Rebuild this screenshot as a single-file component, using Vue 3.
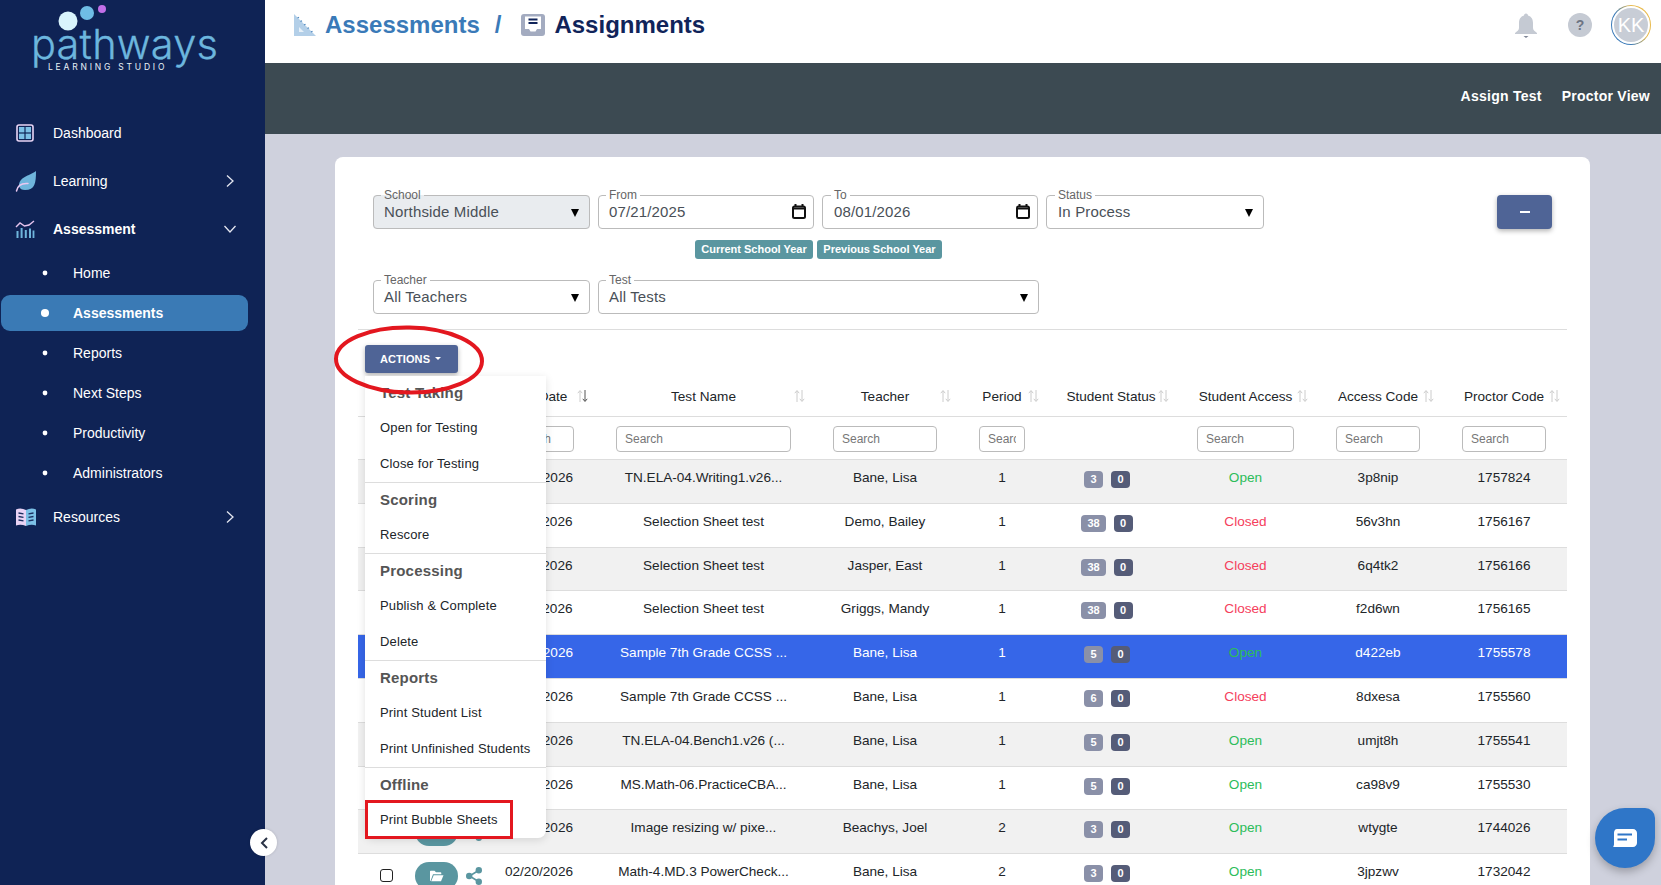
<script setup>
const subNav = ['Home', 'Assessments', 'Reports', 'Next Steps', 'Productivity', 'Administrators']
const headers = [
  { t: '', sort: false }, { t: '', sort: false },
  { t: 'Date', sort: true, active: true }, { t: 'Test Name', sort: true }, { t: 'Teacher', sort: true },
  { t: 'Period', sort: true }, { t: 'Student Status', sort: true }, { t: 'Student Access', sort: true },
  { t: 'Access Code', sort: true }, { t: 'Proctor Code', sort: true }
]
const searchCols = [false, false, true, true, true, true, false, true, true, true]
const rows = [
  ['03/12/2026', 'TN.ELA-04.Writing1.v26...', 'Bane, Lisa', 1, 3, 'Open', '3p8nip', '1757824'],
  ['03/11/2026', 'Selection Sheet test', 'Demo, Bailey', 1, 38, 'Closed', '56v3hn', '1756167'],
  ['03/11/2026', 'Selection Sheet test', 'Jasper, East', 1, 38, 'Closed', '6q4tk2', '1756166'],
  ['03/11/2026', 'Selection Sheet test', 'Griggs, Mandy', 1, 38, 'Closed', 'f2d6wn', '1756165'],
  ['03/10/2026', 'Sample 7th Grade CCSS ...', 'Bane, Lisa', 1, 5, 'Open', 'd422eb', '1755578'],
  ['03/10/2026', 'Sample 7th Grade CCSS ...', 'Bane, Lisa', 1, 6, 'Closed', '8dxesa', '1755560'],
  ['03/10/2026', 'TN.ELA-04.Bench1.v26 (...', 'Bane, Lisa', 1, 5, 'Open', 'umjt8h', '1755541'],
  ['03/10/2026', 'MS.Math-06.PracticeCBA...', 'Bane, Lisa', 1, 5, 'Open', 'ca98v9', '1755530'],
  ['02/27/2026', 'Image resizing w/ pixe...', 'Beachys, Joel', 2, 3, 'Open', 'wtygte', '1744026'],
  ['02/20/2026', 'Math-4.MD.3 PowerCheck...', 'Bane, Lisa', 2, 3, 'Open', '3jpzwv', '1732042']
]
const menu = [
  { h: 'Test Taking', items: ['Open for Testing', 'Close for Testing'] },
  { h: 'Scoring', items: ['Rescore'] },
  { h: 'Processing', items: ['Publish & Complete', 'Delete'] },
  { h: 'Reports', items: ['Print Student List', 'Print Unfinished Students'] },
  { h: 'Offline', items: ['Print Bubble Sheets'] }
]
</script>

<template>
  <div class="app">
    <aside class="side">
      <div class="logo">
        <svg class="dots" width="120" height="40" viewBox="0 0 120 40">
          <circle cx="68" cy="21" r="9.5" fill="#d9f4fc" />
          <circle cx="87" cy="13" r="7" fill="#6fbde5" />
          <circle cx="102" cy="9" r="4" fill="#c26fe8" />
        </svg>
        <div class="logo-word">pathways</div>
        <div class="logo-sub">LEARNING STUDIO</div>
      </div>
      <nav>
        <a class="nav">
          <span class="ico">
            <svg width="20" height="20" viewBox="0 0 20 20">
              <rect x="2" y="2" width="16" height="16" rx="2" fill="#0f2355" stroke="#e9d5f5" stroke-width="1.6" />
              <rect x="4" y="4" width="5.4" height="5.4" fill="#7cc0e6" /><rect x="10.6" y="4" width="5.4" height="5.4" fill="#7cc0e6" />
              <rect x="4" y="10.6" width="5.4" height="5.4" fill="#7cc0e6" /><rect x="10.6" y="10.6" width="5.4" height="5.4" fill="#7cc0e6" />
            </svg>
          </span>Dashboard
        </a>
        <a class="nav">
          <span class="ico">
            <svg width="22" height="22" viewBox="0 0 22 22">
              <path d="M21 1C21 13 20 20 10 20 7 20 5 19 4 16 4 7 14 6 21 1Z" fill="#6fb5dc" />
              <path d="M1.5 21C2.5 15.5 6.500 13 13 13.500" fill="none" stroke="#e9c8f0" stroke-width="1.5" stroke-linecap="round" />
            </svg>
          </span>Learning
          <svg class="chev" width="10" height="14" viewBox="0 0 10 14"><path d="M2 1.5 8 7 2 12.5" fill="none" stroke="#e4e6f0" stroke-width="1.3" /></svg>
        </a>
        <a class="nav strong">
          <span class="ico">
            <svg width="20" height="18" viewBox="0 0 20 18">
              <path d="M1 7 5 3 9.5 6 14 5 19 1" fill="none" stroke="#e6c4ee" stroke-width="1.4" />
              <g fill="#6fb5dc">
                <rect x="1.5" y="11" width="2" height="7" /><rect x="5.6" y="8" width="2" height="10" />
                <rect x="9.8" y="10" width="2" height="8" /><rect x="14" y="8.5" width="2" height="9.5" /><rect x="17.6" y="10.5" width="1.8" height="7.5" />
              </g>
            </svg>
          </span>Assessment
          <svg class="chev down" width="14" height="10" viewBox="0 0 14 10"><path d="M1.5 2 7 8 12.5 2" fill="none" stroke="#e4e6f0" stroke-width="1.3" /></svg>
        </a>
        <a v-for="s in subNav" :key="s" class="sub" :class="{ on: s === 'Assessments' }"><i></i>{{ s }}</a>
        <a class="nav last">
          <span class="ico">
            <svg width="22" height="20" viewBox="0 0 22 20">
              <path d="M1 2.5C4 1 7.5 1.2 11 3V19C7.5 17.4 4 17.2 1 18.5Z" fill="#e9d3f5" />
              <path d="M21 2.5C18 1 14.5 1.2 11 3V19C14.5 17.4 18 17.2 21 18.5Z" fill="#7cc0e6" />
              <g stroke="#1b2f60" stroke-width="1.3"><path d="M3.5 6 8.5 6.8M3.5 9.5 8.5 10.3M3.5 13 8.5 13.8M13.5 6.8 18.5 6M13.5 10.3 18.5 9.5M13.5 13.8 18.5 13" /></g>
            </svg>
          </span>Resources
          <svg class="chev" width="10" height="14" viewBox="0 0 10 14"><path d="M2 1.5 8 7 2 12.5" fill="none" stroke="#e4e6f0" stroke-width="1.3" /></svg>
        </a>
      </nav>
      <button class="collapse" aria-label="Collapse">
        <svg width="10" height="14" viewBox="0 0 10 14"><path d="M8 2 3 7 8 12" fill="none" stroke="#2a3346" stroke-width="2" /></svg>
      </button>
    </aside>

    <main class="main">
      <header class="top">
        <svg class="crumb-ico" width="24" height="24" viewBox="0 0 24 24">
          <path d="M1 1 23 23H1Z" fill="#b3cfe8" />
          <path d="M6 14 11 19H6Z" fill="#e6f0f8" />
          <path d="M4.500 5 6 4.200M7.500 8.500 9 7.700M11 12 12.500 11.200M14.500 15.500 16 14.700M18 19 19.500 18.200" stroke="#4f88bf" stroke-width="1.2" />
        </svg>
        <span class="crumb link">Assessments</span>
        <span class="crumb link slash">/</span>
        <svg class="crumb-ico second" width="24" height="22" viewBox="0 0 24 22">
          <rect width="24" height="22" rx="3" fill="#a3abc0" />
          <path d="M4 2.500H20V15H16L14.500 17.500H9.500L8 15H4Z" fill="#fff" />
          <path d="M7.500 5.500H16.500M7.500 9H16.500" stroke="#10245a" stroke-width="2" />
        </svg>
        <span class="crumb">Assignments</span>
        <div class="top-right">
          <svg width="24" height="25" viewBox="0 0 24 25">
            <path d="M12 0.500C13.300 0.500 14 1.500 14 2.500 17.500 3.500 19 6.500 19 10V15C19 17 21 18.500 23 20V21H1V20C3 18.500 5 17 5 15V10C5 6.500 6.500 3.500 10 2.500 10 1.500 10.700 0.500 12 0.500Z" fill="#c5cad3" />
            <path d="M9.500 23H14.500L12 25Z" fill="#7f8696" />
          </svg>
          <span class="help">?</span>
          <span class="avatar"><span>KK</span></span>
        </div>
      </header>

      <div class="bar">
        <a>Assign Test</a>
        <a>Proctor View</a>
      </div>

      <div class="content">
        <section class="card">
          <div class="filters">
            <div class="frow">
              <fieldset class="fld w217 disabled"><legend>School</legend><div class="val">Northside Middle<i class="tri"></i></div></fieldset>
              <fieldset class="fld w216"><legend>From</legend><div class="val">07/21/2025
                <svg class="cal" width="14" height="15" viewBox="0 0 14 15"><path d="M3.500 0V3M10.500 0V3" stroke="#111" stroke-width="2" /><rect x="1" y="2.500" width="12" height="11.500" rx="1.500" fill="none" stroke="#111" stroke-width="2" /><path d="M1 4.500H13" stroke="#111" stroke-width="2" /></svg>
              </div></fieldset>
              <fieldset class="fld w216 nudge"><legend>To</legend><div class="val">08/01/2026
                <svg class="cal" width="14" height="15" viewBox="0 0 14 15"><path d="M3.500 0V3M10.500 0V3" stroke="#111" stroke-width="2" /><rect x="1" y="2.500" width="12" height="11.500" rx="1.500" fill="none" stroke="#111" stroke-width="2" /><path d="M1 4.500H13" stroke="#111" stroke-width="2" /></svg>
              </div></fieldset>
              <fieldset class="fld w218 nudge"><legend>Status</legend><div class="val">In Process<i class="tri"></i></div></fieldset>
              <button class="minus" aria-label="Collapse filters"><i></i></button>
            </div>
            <div class="tags"><span class="tag t1">Current School Year</span><span class="tag t2">Previous School Year</span></div>
            <div class="frow">
              <fieldset class="fld w217"><legend>Teacher</legend><div class="val">All Teachers<i class="tri"></i></div></fieldset>
              <fieldset class="fld w441"><legend>Test</legend><div class="val">All Tests<i class="tri"></i></div></fieldset>
            </div>
          </div>
          <hr class="rule" />

          <div class="tbl-wrap">
            <button class="actions">ACTIONS<i></i></button>

            <table>
              <colgroup>
                <col style="width:56px" /><col style="width:69px" /><col style="width:112px" /><col style="width:217px" /><col style="width:146px" />
                <col style="width:88px" /><col style="width:130px" /><col style="width:139px" /><col style="width:126px" /><col style="width:126px" />
              </colgroup>
              <thead>
                <tr class="hd">
                  <th v-for="(h, i) in headers" :key="i" :class="{ dt: h.active }">
                    {{ h.t }}
                    <svg v-if="h.sort" class="sort" width="11" height="14" viewBox="0 0 11 14">
                      <path d="M3 13V2M.8 4.200 3 1.500 5.200 4.200" fill="none" stroke="#ccc" stroke-width="1" />
                      <path d="M8 1V12M5.800 9.800 8 12.500 10.200 9.800" fill="none" :stroke="h.active ? '#555' : '#ccc'" stroke-width="1" />
                    </svg>
                  </th>
                </tr>
                <tr class="srch">
                  <th v-for="(s, i) in searchCols" :key="i"><input v-if="s" placeholder="Search" /></th>
                </tr>
              </thead>
              <tbody>
                <tr v-for="(r, i) in rows" :key="r[7]" :class="{ odd: i % 2 === 0, sel: i === 4 }">
                  <td class="chk"><input type="checkbox" /></td>
                  <td class="act">
                    <div class="act-in">
                      <span class="pill">
                        <svg width="15" height="12" viewBox="0 0 15 12"><path d="M1 11V1.500C1 1 1.300.800 1.700.800H5.500L7 2.300H11.500C12 2.300 12.300 2.600 12.300 3V4.200H4L1.500 11Z" fill="#fff" /><path d="M4.700 5.200H14.500L12 11.200H2.200Z" fill="#fff" /></svg>
                      </span>
                      <svg width="16" height="18" viewBox="0 0 16 18"><path d="M12.500 3.500 3.500 9 12.500 14.500" fill="none" stroke="#5a96a0" stroke-width="1.600" /><circle cx="12.800" cy="3.200" r="3.200" fill="#5a96a0" /><circle cx="3.200" cy="9" r="3.200" fill="#5a96a0" /><circle cx="12.800" cy="14.800" r="3.200" fill="#5a96a0" /></svg>
                    </div>
                  </td>
                  <td>{{ r[0] }}</td>
                  <td>{{ r[1] }}</td>
                  <td>{{ r[2] }}</td>
                  <td>{{ r[3] }}</td>
                  <td class="st"><span class="badge b1">{{ r[4] }}</span><span class="badge b2">0</span></td>
                  <td :class="r[5] === 'Open' ? 'open' : 'closed'">{{ r[5] }}</td>
                  <td>{{ r[6] }}</td>
                  <td>{{ r[7] }}</td>
                </tr>
              </tbody>
            </table>

            <div class="menu">
              <div v-for="m in menu" :key="m.h" class="msec">
                <div class="mh">{{ m.h }}</div>
                <div v-for="it in m.items" :key="it" class="mi">{{ it }}</div>
              </div>
            </div>
            <div class="red-box"></div>
            <svg class="red-ring" width="156" height="74" viewBox="0 0 156 74">
              <ellipse cx="76" cy="36" rx="73" ry="32.500" fill="none" stroke="#e3171f" stroke-width="4" transform="rotate(1 76 36)" />
            </svg>
          </div>
        </section>
      </div>
    </main>

    <button class="chat" aria-label="Chat">
      <svg width="24" height="18" viewBox="0 0 24 18">
        <path d="M4 0H20C22.200 0 24 1.800 24 4V14C24 16.200 22.200 18 20 18H1C.500 18 0 17.500 .500 17 1 16.500 1 16 1 14V4C1 1.800 2 0 4 0Z" fill="#fff" />
        <path d="M4.500 5.500H19M4.500 10.500H14" stroke="#2f76c8" stroke-width="2" />
      </svg>
    </button>
  </div>
</template>

<style>
html, body { margin: 0; padding: 0; overflow: hidden; }
</style>

<style scoped>
.app { position: relative; display: flex; height: 100vh; overflow: hidden; font-family: "Liberation Sans", Arial, sans-serif; font-size: 14px; color: #212529; background: #cfd1dd; }
.side { position: relative; flex: 0 0 265px; background: #0f2355; color: #fff; }
.logo { position: relative; height: 109px; box-sizing: border-box; padding-top: 24px; text-align: left; }
.dots { position: absolute; left: 0; top: 0; }
.logo-word { margin-left: 31px; font-family: Inter, sans-serif; font-weight: 300; font-size: 41.500px; line-height: 40px; letter-spacing: .2px; color: #6cb6de; -webkit-text-stroke: .3px #6cb6de; }
.logo-sub { margin: -2px 0 0 48px; font-family: Inter, sans-serif; font-size: 8.500px; line-height: 10px; letter-spacing: 2.800px; color: #e8f2f8; white-space: nowrap; }
nav { display: block; }
.nav { display: flex; align-items: center; height: 48px; padding-right: 30px; color: #fff; }
.nav.strong { font-weight: 700; }
.nav.last { margin-top: -2px; }
.ico { flex: 0 0 53px; display: flex; padding-left: 15px; box-sizing: border-box; }
.chev { margin-left: auto; }
.chev.down { margin-right: -2px; }
.sub { display: flex; align-items: center; height: 36px; margin: 2px 17px 4px 1px; padding-left: 41px; border-radius: 9px; color: #fff; }
.sub i { flex: 0 0 6px; width: 6px; height: 6px; margin-right: 25px; background: #fff; border-radius: 50%; transform: scale(.8); }
.sub.on { background: #3a7ab5; font-weight: 700; }
.sub.on i { transform: scale(1.35); }
.collapse { position: absolute; right: -12px; top: 829px; width: 27px; height: 27px; padding: 0; border: 0; border-radius: 50%; background: #fff; display: flex; align-items: center; justify-content: center; z-index: 5; box-shadow: 0 0 3px rgba(0,0,0,.15); }

.main { flex: 1; min-width: 0; display: flex; flex-direction: column; }
.top { flex: 0 0 63px; box-sizing: border-box; display: flex; align-items: center; padding: 0 0 13px 28px; background: #fff; }
.crumb-ico { flex: none; margin-top: -1px; }
.crumb-ico.second { margin-left: 20px; margin-right: 9px; }
.crumb { font-size: 24px; font-weight: 700; color: #10245a; margin-top: -1px; }
.crumb.link { color: #3a7ab8; margin-left: 8px; }
.crumb.slash { margin-left: 15px; }
.top-right { margin-left: auto; display: flex; align-items: center; padding-right: 10px; }
.help { width: 24px; height: 24px; margin-left: 30px; border-radius: 50%; background: #c5cad3; color: #6d7483; font-weight: 700; font-size: 14px; line-height: 24px; text-align: center; }
.avatar { width: 40px; height: 40px; margin-left: 19px; box-sizing: border-box; padding: 1px; border-radius: 50%; background: conic-gradient(#e8b94a 0 35%, #3a7ab8 50% 85%, #e8b94a 100%); }
.avatar span { display: block; height: 100%; border-radius: 50%; border: 2px solid #fff; box-sizing: border-box; background: #c8cdd6; color: #fff; font-size: 20px; line-height: 34px; text-align: center; }

.bar { flex: 0 0 71px; display: flex; justify-content: flex-end; align-items: center; gap: 20px; padding: 0 11px 6px 0; background: #3c4a52; color: #fff; font-weight: 700; font-size: 14px; letter-spacing: .25px; box-sizing: border-box; }
.content { flex: 1; min-height: 0; overflow: hidden; padding: 23px 71px 0 70px; }
.card { background: #fff; border-radius: 8px; padding: 31px 23px 40px; }
.filters { padding: 0 15px; }
.frow { display: flex; align-items: flex-end; gap: 8px; }
.fld { margin: 0; padding: 0; min-width: 0; box-sizing: border-box; height: 41px; border: 1px solid #bbb; border-radius: 4px; }
.fld legend { margin-left: 7px; padding: 0 3px; font-size: 12px; line-height: 14px; color: #666; }
.w217 { width: 217px; } .w216 { width: 216px; } .w218 { width: 218px; } .w441 { width: 441px; }
.disabled { background: #e9ecef; }
.val { position: relative; height: 25px; padding-left: 10px; font-size: 15px; line-height: 24px; color: #495057; margin-top: -2px; letter-spacing: .15px; }
.nudge legend { margin-left: 8px; }
.nudge .val { padding-left: 11px; }
.tri { position: absolute; right: 10px; top: 9px; width: 0; height: 0; border-left: 4.500px solid transparent; border-right: 4.500px solid transparent; border-top: 8px solid #000; }
.cal { position: absolute; right: 7px; top: 4px; }
.minus { margin-left: auto; width: 55px; height: 34px; padding: 0; border: 0; border-radius: 4px; background: #4f6496; box-shadow: 0 2px 5px rgba(0,0,0,.3); display: flex; align-items: center; justify-content: center; }
.minus i { width: 10px; height: 2px; background: #fff; }
.tags { display: flex; gap: 4px; margin: 11px 0 14px 322px; }
.tag { height: 19px; box-sizing: border-box; border-radius: 3px; background: #5a96a0; color: #fff; font-weight: 700; font-size: 11px; line-height: 19px; text-align: center; }
.t1 { width: 118px; } .t2 { width: 125px; }
.rule { margin: 15px 0 0; border: 0; border-top: 1px solid #ddd; }

.tbl-wrap { position: relative; }
.actions { display: flex; align-items: center; justify-content: center; gap: 5px; width: 93px; height: 28px; margin: 15px 0 3px 7px; padding: 0 2px 0 0; border: 0; border-radius: 3px; background: #4f6496; color: #fff; font: 700 11px "Liberation Sans", Arial, sans-serif; letter-spacing: .1px; box-shadow: 0 2px 5px rgba(0,0,0,.3); }
.actions i { width: 0; height: 0; border-left: 3px solid transparent; border-right: 3px solid transparent; border-top: 3px solid #fff; margin-top: -1px; }
table { width: 1209px; table-layout: fixed; border-collapse: collapse; text-align: center; font-size: 13.600px; }
th { position: relative; font-weight: 400; padding: 0; }
.hd th { height: 40px; border-bottom: 1px solid #ddd; white-space: nowrap; }
.hd th.dt { padding-left: 28px; }
.sort { position: absolute; right: 7px; top: 13px; }
.srch th { height: 43px; padding: 1px 21px 0; border-bottom: 1px solid #ddd; box-sizing: border-box; }
.srch input { display: block; width: 100%; height: 26px; box-sizing: border-box; padding: 0 8px; border: 1px solid #bbb; border-radius: 4px; font: 12px "Liberation Sans", Arial, sans-serif; outline: 0; }
.srch input::placeholder { color: #777; opacity: 1; }
td { height: 43.800px; box-sizing: border-box; padding: 8px 2px 0; line-height: 20px; vertical-align: top; white-space: nowrap; border-bottom: 1px solid #ddd; overflow: hidden; }
tr.odd td { background: #f1f1f1; }
tr.sel td { background: #3666e8; color: #fff; }
.chk { padding: 15px 0 0; }
.chk input { appearance: none; display: block; width: 13px; height: 13px; margin: 0 auto; border: 1.500px solid #222; border-radius: 3px; background: #fff; box-sizing: border-box; }
.act { padding: 8px 0 0 1px; overflow: visible; }
.act-in { display: flex; align-items: center; gap: 8px; }
.pill { flex: 0 0 43px; height: 28px; border-radius: 14px; background: #5a96a0; display: flex; align-items: center; justify-content: center; }
td.st { padding-right: 10px; }
.badge { display: inline-block; min-width: 19px; height: 17px; padding: 0 6px; box-sizing: border-box; margin-top: 3px; border-radius: 4px; color: #fff; font-size: 11px; font-weight: 700; line-height: 17px; vertical-align: top; }
.b1 { background: #8a90a8; } .b2 { background: #555c78; margin-left: 8px; }
td.open, tr.sel td.open { color: #2dbd5a; }
td.closed { color: #f5405c; }

.menu { position: absolute; left: 7px; top: 31px; width: 181px; background: #fff; border-radius: 0 0 8px 8px; box-shadow: 0 2px 8px rgba(0,0,0,.12); z-index: 2; }
.msec + .msec { border-top: 1px solid #ddd; }
.mh { height: 34px; padding-left: 15px; font-size: 15px; font-weight: 700; line-height: 33px; color: #555; letter-spacing: .2px; }
.mi { height: 36px; padding-left: 15px; font-size: 13px; line-height: 36px; color: #212529; letter-spacing: .15px; white-space: nowrap; }
.red-box { position: absolute; left: 7px; top: 455px; width: 148px; height: 39px; box-sizing: border-box; border: 3.500px solid #e3171f; z-index: 3; }
.red-ring { position: absolute; left: -25px; top: -21px; z-index: 3; pointer-events: none; }
.chat { position: absolute; left: 1595px; top: 808px; width: 60px; height: 60px; padding: 0; border: 0; border-radius: 50% 10px 50% 50%; background: #2f76c8; box-shadow: 0 4px 8px rgba(0,0,0,.25); display: flex; align-items: center; justify-content: center; z-index: 6; }
</style>
